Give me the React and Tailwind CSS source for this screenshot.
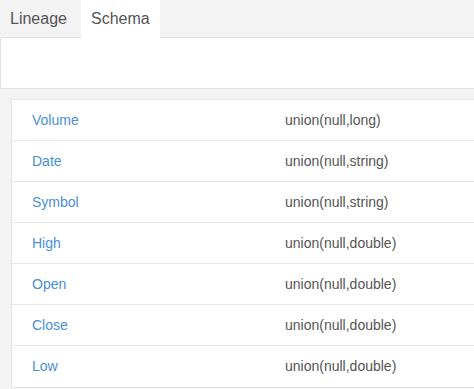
import React from "react";

const fields = [
  { name: "Volume", type: "union(null,long)" },
  { name: "Date", type: "union(null,string)" },
  { name: "Symbol", type: "union(null,string)" },
  { name: "High", type: "union(null,double)" },
  { name: "Open", type: "union(null,double)" },
  { name: "Close", type: "union(null,double)" },
  { name: "Low", type: "union(null,double)" },
];

const App = () => {
  return (
    <div className="min-h-screen bg-[#f3f3f3] overflow-hidden text-[14px] font-['Liberation_Sans',Arial,sans-serif]">
      {/* Tabs */}
      <div className="flex h-[38px] text-[16px]">
        <div className="w-[81px] flex items-center pl-[10px] text-[#555] border-b border-[#e3e3e3]">Lineage</div>
        <div className="w-[79px] flex items-center pl-[10px] bg-white text-[#555]">Schema</div>
        <div className="flex-1 border-b border-[#e3e3e3]"></div>
      </div>
      {/* Tab panel */}
      <div className="h-[51px] bg-white border-b border-[#e3e3e3] border-l"></div>
      {/* Schema table */}
      <div className="pl-[11px] pt-[10px]">
        <div className="w-[480px] bg-white border border-[#e6e6e6]">
          {fields.map((f, i) => (
            <div
              key={f.name}
              className={`flex items-center h-[41px] ${i < fields.length - 1 ? "border-b border-[#e8e8e8]" : "h-[40px]"}`}
            >
              <div className="w-[273px] pl-[20px] text-[#4a8fd3]">{f.name}</div>
              <div className="text-[#555]">{f.type}</div>
            </div>
          ))}
        </div>
      </div>
    </div>
  );
};

export default App;
